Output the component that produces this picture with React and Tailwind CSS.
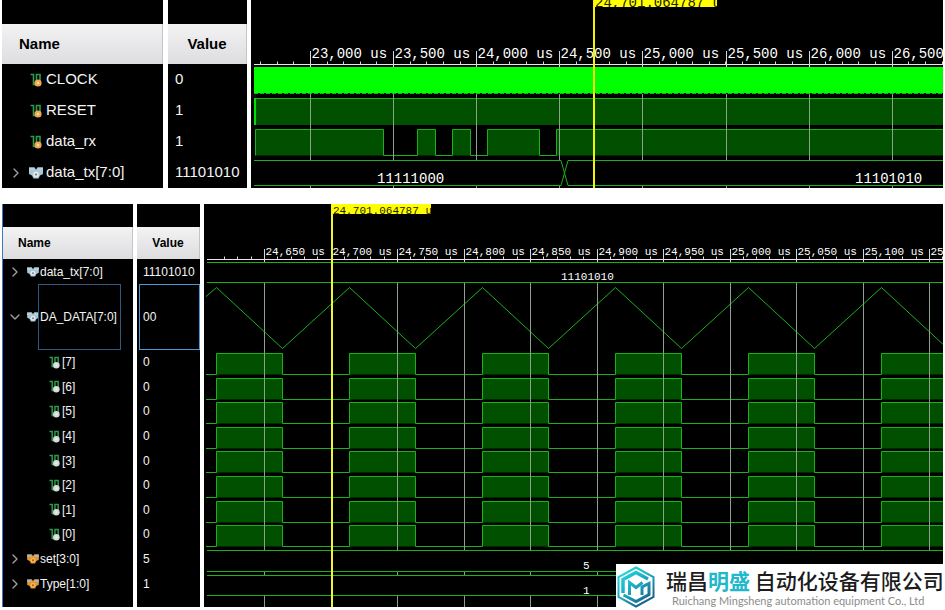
import clsx from 'clsx';
import { ChevronDown, ChevronRight } from 'lucide-react';

const LINE = '#1cb01c';
const FILL = '#005000';
const GRID = '#8f9f8f';

const bits = [7, 6, 5, 4, 3, 2, 1, 0];

function WireIcon({ dot, size }) {
  return (
    <svg viewBox="0 0 12 14" width={size} height={size + 2} fill="none" className="shrink-0">
      <path d="M0.500 1.500H3.500V11.500H6M6.500 8V1.500H10V8" stroke="#2f9a4c" strokeWidth="1.600" />
      <circle cx="8" cy="10" r="3.600" fill={dot} />
      <circle cx="8" cy="10" r="1.200" fill="#fff" fillOpacity="0.6" />
    </svg>
  );
}

function BusIcon({ tone, size }) {
  const orange = tone === 'orange';
  return (
    <svg viewBox="0 0 14 12" width={size} height={size - 2} className="shrink-0">
      <path d="M0 0.500h5.500l1.500 2 1.500-2H14V7l-3 1.500L9.500 11.500h-5L3 8.500 0 7z" fill={orange ? '#e8962c' : '#a9c6d4'} />
      <path d="M0 0.500h5.500v3H0zM8.500 0.500H14v3H8.500z" fill={orange ? '#a9b4b4' : '#b7d0dc'} />
      <circle cx="7" cy="7.500" r="2.900" fill={orange ? '#f4b458' : '#e4e8ea'} />
      <circle cx="7" cy="7.500" r="1.100" fill={orange ? '#8a5a1c' : '#6c7880'} />
    </svg>
  );
}

function HeaderCell({ children, className }) {
  return (
    <div
      className={clsx(
        'flex items-center border-r border-[#c4c4c6] bg-linear-to-b from-[#f3f3f4] to-[#dddddf] font-bold text-black',
        className,
      )}
    >
      {children}
    </div>
  );
}

function Expander({ open, label }) {
  const Icon = open ? ChevronDown : ChevronRight;
  return (
    <button type="button" aria-label={label} aria-expanded={!!open} className="flex w-4 shrink-0 justify-center text-[#a0a0a0]">
      <Icon size={16} strokeWidth={2} />
    </button>
  );
}

function Ruler({ start, step, count, labels, axisY, font, labelY, top, bottom }) {
  const minor = step / 5;
  const first = start - 3 * minor;
  return (
    <g>
      <line x1="3" x2="100%" y1={axisY} y2={axisY} stroke="#e8e8e8" />
      {Array.from({ length: count * 5 + 3 }, (_, i) => {
        const x = Math.round(first + i * minor) + 0.5;
        return <line key={i} x1={x} x2={x} y1={axisY - 3} y2={axisY} stroke="#d8d8d8" />;
      })}
      {labels.map((label, i) => {
        const x = Math.round(start + i * step) + 0.5;
        return (
          <g key={label}>
            <line x1={x} x2={x} y1={top} y2={bottom} stroke="#d8d8d8" />
            <text x={x + 1} y={labelY} fontSize={font} fill="#ffffff">{label}</text>
          </g>
        );
      })}
    </g>
  );
}

function Grid({ start, step, count, spans }) {
  return Array.from({ length: count }, (_, i) => {
    const x = Math.round(start + i * step) + 0.5;
    return spans.map(([y1, y2]) => (
      <line key={`${i}-${y1}`} x1={x} x2={x} y1={y1} y2={y2} stroke={GRID} />
    ));
  });
}

function HLine({ y }) {
  return <line x1="3" x2="100%" y1={y} y2={y} stroke={LINE} />;
}

const topLabels = ['23,000 us', '23,500 us', '24,000 us', '24,500 us', '25,000 us', '25,500 us', '26,000 us', '26,500 us'];

function SerialWave() {
  return (
    <svg className="block h-full w-full font-['Liberation_Mono',monospace]" role="img" aria-label="Serial waveform">
      <Ruler start={59} step={83.1} count={8} labels={topLabels} axisY={64.5} font={14} labelY={58} top={51} bottom={67} />
      <rect x="3" y="67" width="100%" height="26" fill="#00ff00" />
      <line x1="3" x2="100%" y1="93.5" y2="93.5" stroke="#00c800" strokeDasharray="4 2" />
      <rect x="4" y="98" width="100%" height="27" fill={FILL} />
      <HLine y={98.5} />
      <rect x="3" y="98" width="2" height="27" fill="#00e000" />
      <path
        d="M4.5 155.5V129.5H132.5V155.5H166.5V129.5H184.5V155.5H201.5V129.5H219.5V155.5H236.5V129.5H288.5V155.5H305.5V129.5H2400V155.5"
        fill={FILL}
      />
      <path
        d="M4.5 155.5V129.5H132.5V155.5H166.5V129.5H184.5V155.5H201.5V129.5H219.5V155.5H236.5V129.5H288.5V155.5H305.5V129.5H2400"
        fill="none"
        stroke={LINE}
      />
      <Grid start={59} step={83.1} count={8} spans={[[94, 160], [186, 188]]} />
      <path d="M3 160.5H310L317 185.5H2400M3 185.5H310L317 160.5H2400" fill="none" stroke={LINE} />
      <text x="126" y="183" fontSize="14" fill="#ffffff">11111000</text>
      <text x="604" y="183" fontSize="14" fill="#ffffff">11101010</text>
      <rect x="342" y="0" width="2" height="188" fill="#f4f400" />
      <svg x="343" y="0" width="123" height="7">
        <rect width="100%" height="100%" fill="#ffff00" />
        <text x="1" y="7" fontSize="14" fill="#202000">24,701.064787 us</text>
      </svg>
    </svg>
  );
}

const bottomLabels = [
  '24,650 us', '24,700 us', '24,750 us', '24,800 us', '24,850 us', '24,900 us',
  '24,950 us', '25,000 us', '25,050 us', '25,100 us', '25,150 us',
];
const periods = [0, 1, 2, 3, 4, 5];

function DacWave() {
  const ramp = periods.map((p) => `L${12.5 + p * 133} 83.5L${78.5 + p * 133} 144.5`).join('');
  return (
    <svg className="block h-full w-full font-['Liberation_Mono',monospace]" role="img" aria-label="DAC waveform">
      <Ruler start={60} step={66.5} count={11} labels={bottomLabels} axisY={55.5} font={11} labelY={51} top={45} bottom={58} />
      <HLine y={58.5} />
      <HLine y={78.5} />
      <text x="357" y="76" fontSize="11" fill="#ffffff">11101010</text>
      <path d={`M2 92.5${ramp}`} fill="none" stroke={LINE} />
      {bits.map((bit, i) => {
        const top = Math.round(149 + i * 24.6) + 0.5;
        const base = top + 21;
        const d = periods.map((p) => `H${12.5 + p * 133}V${top}H${78.5 + p * 133}V${base}`).join('');
        return <path key={bit} d={`M2 ${base}${d}`} fill={FILL} stroke={LINE} />;
      })}
      <Grid start={60} step={66.5} count={11} spans={[[79, 346], [367, 371], [392, 403]]} />
      <HLine y={346.5} />
      <HLine y={367.5} />
      <HLine y={371.5} />
      <HLine y={391.5} />
      <text x="379" y="365" fontSize="11" fill="#ffffff">5</text>
      <text x="379" y="390" fontSize="11" fill="#ffffff">1</text>
      <rect x="127" y="0" width="2" height="403" fill="#f4f432" />
      <svg x="128" y="0" width="99" height="10">
        <rect width="100%" height="100%" fill="#ffff00" />
        <text x="1" y="10" fontSize="11" fill="#202000">24,701.064787 us</text>
      </svg>
    </svg>
  );
}

function SerialPanel() {
  const signals = [
    { name: 'CLOCK', value: '0' },
    { name: 'RESET', value: '1' },
    { name: 'data_rx', value: '1' },
  ];
  return (
    <section className="flex bg-white text-[15px] text-[#f4f4f4]">
      <div className="w-[161px] shrink-0 bg-black pt-6">
        <HeaderCell className="h-10 pl-[17px]">Name</HeaderCell>
        {signals.map((s) => (
          <div key={s.name} className="flex h-[31px] items-center gap-1 pl-7">
            <WireIcon dot="#f0a850" size={12} />
            {s.name}
          </div>
        ))}
        <div className="flex h-[31px] items-center pl-1.5">
          <Expander label="Expand data_tx" />
          <span className="flex items-center gap-[3px] pl-[5px]">
            <BusIcon size={14} />
            data_tx[7:0]
          </span>
        </div>
      </div>
      <div className="ml-[5px] w-[79px] shrink-0 bg-black pt-6">
        <HeaderCell className="h-10 justify-center">Value</HeaderCell>
        {[...signals.map((s) => s.value), '11101010'].map((v, i) => (
          <div key={i} className="flex h-[31px] items-center pl-[7px]">{v}</div>
        ))}
      </div>
      <div className="ml-1 min-w-0 flex-1 bg-black">
        <SerialWave />
      </div>
    </section>
  );
}

function DacPanel() {
  const buses = [
    { name: 'set[3:0]', value: '5' },
    { name: 'Type[1:0]', value: '1' },
  ];
  return (
    <section className="flex bg-white text-[12px] text-[#f4f4f4]">
      <div className="w-[131px] shrink-0 border-l border-[#3f78c8] bg-black pt-[23px] pb-[11px]">
        <HeaderCell className="h-8 pl-[15px]">Name</HeaderCell>
        <div className="flex h-[25px] items-center pl-1">
          <Expander label="Expand data_tx" />
          <span className="flex items-center gap-px pl-1">
            <BusIcon size={12} />
            data_tx[7:0]
          </span>
        </div>
        <div className="flex h-[66px] items-center pl-1">
          <Expander open label="Collapse DA_DATA" />
          <span className="w-[15px] shrink-0 pl-1">
            <BusIcon size={12} />
          </span>
          <span className="flex h-full w-[83px] items-center border border-[#2c5a80] pl-px">DA_DATA[7:0]</span>
        </div>
        <div className="grid h-[246px] grid-rows-10">
          {bits.map((bit) => (
            <div key={bit} className="flex items-center gap-0.5 pl-[46px]">
              <WireIcon dot="#d4dcd8" size={11} />
              [{bit}]
            </div>
          ))}
          {buses.map((b) => (
            <div key={b.name} className="flex items-center pl-1">
              <Expander label={`Expand ${b.name}`} />
              <span className="flex items-center gap-px pl-1">
                <BusIcon tone="orange" size={12} />
                {b.name}
              </span>
            </div>
          ))}
        </div>
      </div>
      <div className="ml-1 w-[63px] shrink-0 bg-black pt-[23px] pb-[11px]">
        <HeaderCell className="h-8 justify-center">Value</HeaderCell>
        <div className="flex h-[25px] items-center pl-1.5">11101010</div>
        <div className="ml-0.5 flex h-[66px] items-center border border-[#4a9ad8] pl-[3px]">00</div>
        <div className="grid h-[246px] grid-rows-10">
          {[...bits.map(() => '0'), ...buses.map((b) => b.value)].map((v, i) => (
            <div key={i} className="flex items-center pl-1.5">{v}</div>
          ))}
        </div>
      </div>
      <div className="ml-1 min-w-0 flex-1 bg-black">
        <DacWave />
      </div>
    </section>
  );
}

function LogoMark() {
  return (
    <svg viewBox="0 0 40 44" width="40" height="44" fill="none" className="shrink-0">
      <defs>
        <linearGradient id="mark" gradientUnits="userSpaceOnUse" x1="6" y1="4" x2="34" y2="40">
          <stop offset="0" stopColor="#22dce0" />
          <stop offset="0.5" stopColor="#1ba6c0" />
          <stop offset="1" stopColor="#1a4f7c" />
        </linearGradient>
      </defs>
      <g stroke="url(#mark)">
        <path d="M20 2.500L37.500 12v20L20 41.500L2.500 32V12z" strokeWidth="2" />
        <path d="M7 28V14.500L20 7.500l12 6.500" strokeWidth="3.500" />
        <path d="M7.500 30L20 36.500L33 29.500V18.500L26 22v8" strokeWidth="3" />
        <path d="M13.500 30V17.500L20 22.500l6.500-5" strokeWidth="3" />
      </g>
    </svg>
  );
}

function Watermark() {
  return (
    <footer className="absolute right-0 bottom-0 flex h-[46px] w-[329px] items-center bg-white">
      <LogoMark />
      <div className="ml-2.5 whitespace-nowrap">
        <p className="font-['Noto_Sans_CJK_SC',sans-serif] text-[21px] leading-[28px] font-medium text-[#1c1c1c]">
          瑞昌<span className="font-bold text-[#22b8cc]">明盛</span> 自动化设备有限公司
        </p>
        <p className="pl-1.5 font-['Lato',sans-serif] text-[11px] leading-[14px] text-[#8c8c8c]">
          Ruichang Mingsheng automation equipment Co., Ltd
        </p>
      </div>
    </footer>
  );
}

export default function App() {
  return (
    <main className="relative flex flex-col gap-4 bg-white pr-0.5 pb-[3px] pl-0.5 font-['Liberation_Sans',Arial,sans-serif]">
      <SerialPanel />
      <DacPanel />
      <Watermark />
    </main>
  );
}
